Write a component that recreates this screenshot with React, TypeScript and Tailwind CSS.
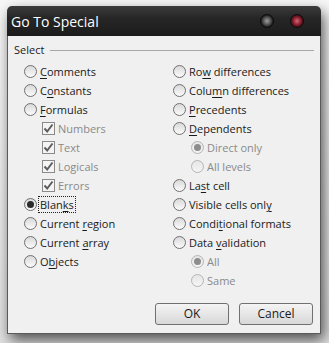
import type { ReactNode } from "react";

type Opt = {
  label: ReactNode;
  kind: "radio" | "check";
  checked?: boolean;
  disabled?: boolean;
  indent?: boolean;
  focus?: boolean;
};

function U({ c }: { c: string }) {
  return <span className="underline underline-offset-[2px]">{c}</span>;
}

const left: Opt[] = [
  { kind: "radio", label: <><U c="C" />omments</> },
  { kind: "radio", label: <>C<U c="o" />nstants</> },
  { kind: "radio", label: <><U c="F" />ormulas</> },
  { kind: "check", label: "Numbers", checked: true, disabled: true, indent: true },
  { kind: "check", label: "Text", checked: true, disabled: true, indent: true },
  { kind: "check", label: "Logicals", checked: true, disabled: true, indent: true },
  { kind: "check", label: "Errors", checked: true, disabled: true, indent: true },
  { kind: "radio", label: <>Blan<U c="k" />s</>, checked: true, focus: true },
  { kind: "radio", label: <>Current <U c="r" />egion</> },
  { kind: "radio", label: <>Current <U c="a" />rray</> },
  { kind: "radio", label: <>O<U c="b" />jects</> },
];

const right: Opt[] = [
  { kind: "radio", label: <>Ro<U c="w" /> differences</> },
  { kind: "radio", label: <>Colu<U c="m" />n differences</> },
  { kind: "radio", label: <><U c="P" />recedents</> },
  { kind: "radio", label: <><U c="D" />ependents</> },
  { kind: "radio", label: "Direct only", checked: true, disabled: true, indent: true },
  { kind: "radio", label: "All levels", disabled: true, indent: true },
  { kind: "radio", label: <>La<U c="s" />t cell</> },
  { kind: "radio", label: <>Visible cells onl<U c="y" /></> },
  { kind: "radio", label: <>Condi<U c="t" />ional formats</> },
  { kind: "radio", label: <>Data <U c="v" />alidation</> },
  { kind: "radio", label: "All", checked: true, disabled: true, indent: true },
  { kind: "radio", label: "Same", disabled: true, indent: true },
];

function Radio({ checked, disabled }: { checked?: boolean; disabled?: boolean }) {
  return (
    <span
      className={
        disabled
          ? "flex h-[13px] w-[13px] shrink-0 items-center justify-center rounded-full border border-[#b5b5b5] bg-[linear-gradient(#e6e6e6,#f4f4f4)]"
          : "flex h-[13px] w-[13px] shrink-0 items-center justify-center rounded-full border border-[#707070] bg-[linear-gradient(#d9d9d9,#fbfbfb)]"
      }
    >
      {checked && (
        <span
          className={
            disabled
              ? "h-[7px] w-[7px] rounded-full bg-[#8d8d8d]"
              : "h-[7px] w-[7px] rounded-full bg-[#2a2a2a]"
          }
        />
      )}
    </span>
  );
}

function Check() {
  return (
    <span className="flex h-[13px] w-[13px] shrink-0 items-center justify-center border border-[#8a8a8a] bg-[#f4f4f4]">
      <svg width="11" height="11" viewBox="0 0 11 11">
        <path d="M1.5 5.5 L4.2 8.5 L9.5 1.5" fill="none" stroke="#5e5e5e" strokeWidth="2" />
      </svg>
    </span>
  );
}

function Row({ o }: { o: Opt }) {
  return (
    <div className={`flex h-[19px] items-center ${o.indent ? "pl-[18px]" : ""}`}>
      {o.kind === "radio" ? <Radio checked={o.checked} disabled={o.disabled} /> : <Check />}
      <span
        className={`ml-[2px] px-[1px] leading-[15px] ${o.disabled ? "text-[#8a8a8a]" : "text-[#1a1a1a]"} ${
          o.focus ? "outline outline-1 outline-dotted outline-[#222]" : ""
        }`}
      >
        {o.label}
      </span>
    </div>
  );
}

export default function App() {
  return (
    <div className="h-[343px] w-[329px] overflow-hidden bg-[linear-gradient(#f7f7f7,#e0e0e0)] pl-[7px] pt-[6px] font-['Open_Sans','Noto_Sans',sans-serif]">
      <div className="flex h-[328px] w-[314px] flex-col rounded-t-[5px] shadow-[3px_6px_14px_rgba(0,0,0,0.65)]">
        <div className="flex h-[30px] items-center rounded-t-[5px] bg-[linear-gradient(#3c3c3c,#262626_40%,#1c1c1c)] pl-[4px] pr-[17px]">
          <span className="text-[14px] text-white">Go To Special</span>
          <span className="ml-auto h-[14px] w-[14px] rounded-full border border-[#0c0c0c] bg-[radial-gradient(circle,#a0a0a0_0%,#5a5a5a_40%,#161616_75%)]" />
          <span className="ml-[16px] h-[14px] w-[14px] rounded-full border border-[#0c0c0c] bg-[radial-gradient(circle,#d06a78_0%,#8a1f2d_45%,#2a0a0e_80%)]" />
        </div>
        <div className="flex flex-1 flex-col border-x border-b border-[#5a5a5a] bg-[#f0f0f0] pb-[8px] pt-[6px] text-[11px]">
          <div className="flex h-[16px] items-center pl-[6px] pr-[6px]">
            <span className="text-[#1a1a1a]">Select</span>
            <span className="ml-[6px] h-px flex-1 bg-[#a8a8a8]" />
          </div>
          <div className="mt-[4px] grid grid-cols-[149px_1fr] pl-[16px]">
            <div className="flex flex-col">
              {left.map((o, i) => (
                <Row key={i} o={o} />
              ))}
            </div>
            <div className="flex flex-col">
              {right.map((o, i) => (
                <Row key={i} o={o} />
              ))}
            </div>
          </div>
          <div className="mt-auto flex justify-end gap-[10px] pr-[7px]">
            <button className="h-[22px] w-[74px] rounded-[3px] border border-[#707070] bg-[linear-gradient(#f4f4f4,#e6e6e6_50%,#d8d8d8)] text-[12px] text-[#1a1a1a]">
              OK
            </button>
            <button className="h-[22px] w-[74px] rounded-[3px] border border-[#707070] bg-[linear-gradient(#f4f4f4,#e6e6e6_50%,#d8d8d8)] text-[12px] text-[#1a1a1a]">
              Cancel
            </button>
          </div>
        </div>
      </div>
    </div>
  );
}
